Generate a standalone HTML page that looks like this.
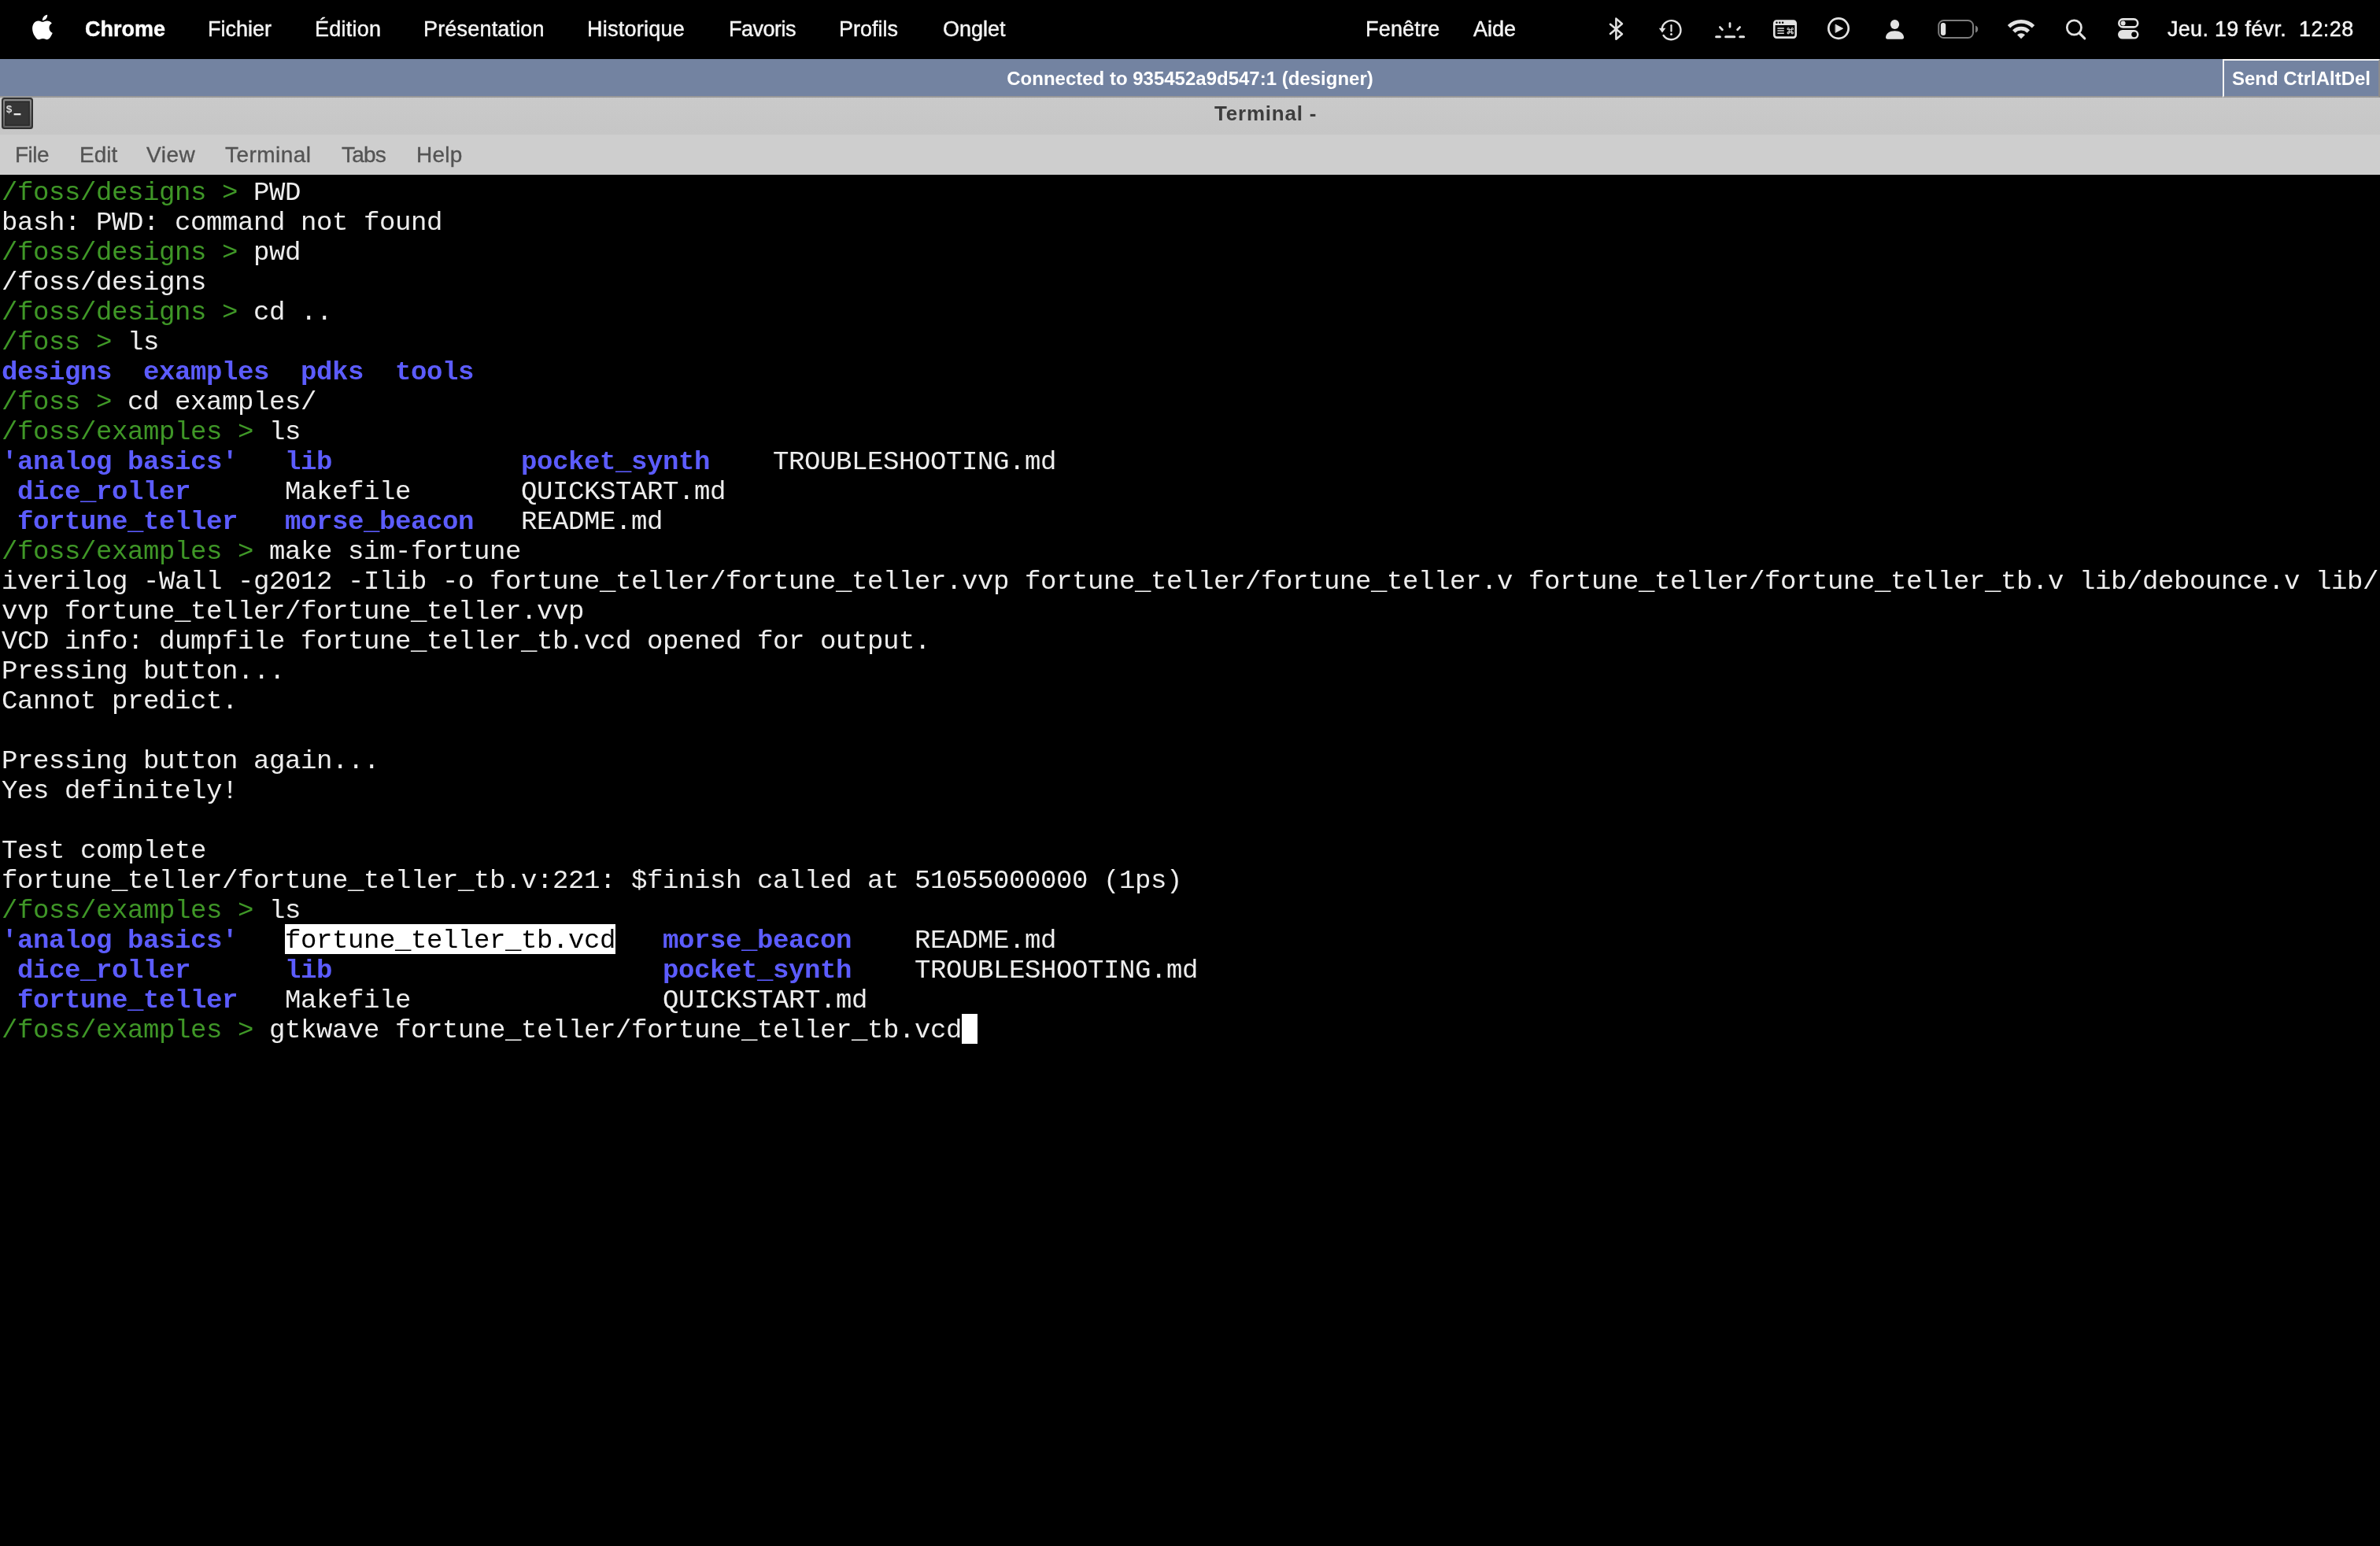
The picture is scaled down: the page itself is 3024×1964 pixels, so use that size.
<!DOCTYPE html>
<html lang="fr">
<head>
<meta charset="utf-8">
<title>Terminal -</title>
<style>
html,body{margin:0;padding:0;overflow:hidden;}
#macbar .mi,#vncbar,#cad,#title .t,#menu .m,#term .r{will-change:transform;}
body{width:3024px;height:1964px;overflow:hidden;background:#000;position:relative;font-family:"Liberation Sans",sans-serif;}
.abs{position:absolute;}
/* macOS menu bar */
#macbar{position:absolute;left:0;top:0;width:3024px;height:75px;background:#000;color:#ececec;}
#macbar .mi{-webkit-text-stroke:0.45px #f4f4f4;position:absolute;top:0;height:75px;line-height:75px;font-size:27px;white-space:pre;color:#f4f4f4;}
#macbar .mi.b{font-weight:bold;color:#fff;-webkit-text-stroke:0.4px #fff;}
#macbar svg{position:absolute;overflow:visible;}
/* noVNC bar */
#vncbar{position:absolute;left:0;top:75px;width:3024px;height:47px;background:#7383a1;border-bottom:2px solid #999;color:#fff;font-weight:bold;font-size:24px;text-align:center;line-height:50px;}
#cad{position:absolute;left:2824px;top:75px;width:196px;height:45px;border-style:solid;border-width:2px;border-color:#f4f4f4 #8c8c8c #999 #f4f4f4;color:#fff;font-weight:bold;font-size:24px;line-height:45px;text-align:center;white-space:pre;}
/* xfce terminal title */
#title{position:absolute;left:0;top:124px;width:3024px;height:47px;background:linear-gradient(#cacaca,#c6c6c6);}
#title .t{position:absolute;left:1543px;top:0;height:47px;line-height:41px;font-size:26px;letter-spacing:0.8px;font-weight:bold;color:#3d3d3d;white-space:pre;}
#menu{position:absolute;left:0;top:171px;width:3024px;height:51px;background:#cecece;}
#menu .m{position:absolute;top:0;height:51px;line-height:51px;font-size:28px;color:#545454;-webkit-text-stroke:0.35px #545454;white-space:pre;}
/* terminal */
#term{position:absolute;left:0;top:222px;width:3024px;height:1742px;background:#000;overflow:hidden;}
#term .r{position:absolute;left:2px;height:38px;line-height:38px;white-space:pre;font-family:"Liberation Mono",monospace;font-size:34px;letter-spacing:-0.4033px;color:#ededed;}
#term .g{color:#3f9727;}
#term .d{color:#5c5cff;font-weight:bold;}
#term .sel{color:#000;}
#selbox{position:absolute;left:362px;top:952px;width:420px;height:38px;background:#fff;}
#cursor{position:absolute;left:1222px;top:1066px;width:20px;height:38px;background:#fff;}
</style>
</head>
<body>
<div id="macbar">
<svg id="micons" style="left:0;top:0" width="3024" height="75" viewBox="0 0 3024 75" fill="none" stroke="#e2e2e2" stroke-linecap="round" stroke-linejoin="round">
<g transform="translate(38.2,18.8) scale(1.31)" fill="#fff" stroke="none"><path d="M12.152 6.896c-.948 0-2.415-1.078-3.96-1.04-2.04.027-3.91 1.183-4.961 3.014-2.117 3.675-.546 9.103 1.519 12.09 1.013 1.454 2.208 3.09 3.792 3.039 1.52-.065 2.09-.987 3.935-.987 1.831 0 2.35.987 3.96.948 1.637-.026 2.676-1.48 3.676-2.948 1.156-1.688 1.636-3.325 1.662-3.415-.039-.013-3.182-1.221-3.22-4.857-.026-3.04 2.48-4.494 2.597-4.559-1.429-2.09-3.623-2.324-4.39-2.376-2-.156-3.675 1.09-4.61 1.09zM15.53 3.83c.843-1.012 1.4-2.427 1.245-3.83-1.207.052-2.662.805-3.532 1.818-.78.896-1.454 2.338-1.273 3.714 1.338.104 2.715-.688 3.559-1.701"/></g>
<!-- bluetooth -->
<path d="M2046,30.7 L2061,43.3 L2053.4,49.8 L2053.4,23.6 L2061,30.2 L2046,43" stroke-width="2.5"/>
<!-- time machine -->
<path d="M2113.6,45 A12,12 0 1 0 2111.6,36.5" stroke-width="2.4"/>
<path d="M2107.8,35.8 L2116.4,35.8 L2112,41.6 Z" fill="#e2e2e2" stroke="none"/>
<path d="M2123.5,32.2 L2123.5,39.6" stroke-width="2.2"/><circle cx="2123.5" cy="43.5" r="1.5" fill="#e2e2e2" stroke="none"/>
<!-- keyboard brightness -->
<path d="M2180.6,46.8 H2185.4 M2192.6,46.8 H2203.8 M2210.8,46.8 H2215.6" stroke-width="3"/>
<path d="M2198,29.6 V34.2 M2185.4,34.6 L2188.4,37.8 M2210.6,34.6 L2207.6,37.8" stroke-width="2.8"/>
<!-- window with cmd -->
<rect x="2254.3" y="26.5" width="27.4" height="21.1" rx="3" stroke-width="2.6"/>
<rect x="2255" y="27" width="26" height="5" fill="#e2e2e2" stroke="none"/>
<circle cx="2257.5" cy="28.8" r="1.2" fill="#000" stroke="none"/><circle cx="2261.3" cy="28.8" r="1.2" fill="#000" stroke="none"/><circle cx="2265.1" cy="28.8" r="1.2" fill="#000" stroke="none"/>
<path d="M2258.4,36 H2266.8 M2258.4,39.1 H2266.8 M2258.4,42.2 H2266.8" stroke-width="1.5" stroke-linecap="butt"/>
<path d="M2273.3,37.8 H2276.1 V40.6 H2273.3 Z M2273.3,37.8 H2272.15 A1.15,1.15 0 1 1 2273.3,36.65 Z M2276.1,37.8 V36.65 A1.15,1.15 0 1 1 2277.25,37.8 Z M2276.1,40.6 H2277.25 A1.15,1.15 0 1 1 2276.1,41.75 Z M2273.3,40.6 V41.75 A1.15,1.15 0 1 1 2272.15,40.6 Z" stroke-width="1.05"/>
<!-- play -->
<circle cx="2336" cy="36.1" r="12.7" stroke-width="2.7"/>
<path d="M2332.4,31.3 L2341.6,36.2 L2332.4,41.2 Z" fill="#e2e2e2" stroke="#e2e2e2" stroke-width="0.9"/>
<!-- person -->
<ellipse cx="2407.5" cy="31" rx="5.6" ry="6" fill="#e2e2e2" stroke="none"/>
<path d="M2396,47.6 C2396,42.5 2401,39.2 2407.5,39.2 C2414,39.2 2419,42.5 2419,47.6 C2419,49 2418.2,49.7 2416.8,49.7 H2398.2 C2396.8,49.7 2396,49 2396,47.6 Z" fill="#e2e2e2" stroke="none"/>
<!-- battery -->
<rect x="2463.2" y="26" width="43.8" height="22" rx="6.5" stroke="#7d7d7d" stroke-width="2"/>
<rect x="2465.9" y="28.9" width="6.3" height="16.2" rx="3" fill="#e4e4e4" stroke="none"/>
<path d="M2510,32.6 C2512.2,33.4 2513.2,35 2513.2,37 C2513.2,39 2512.2,40.6 2510,41.4 Z" fill="#7d7d7d" stroke="none"/>
<!-- wifi -->
<g fill="#e2e2e2" stroke="none">
<path d="M2550.8,31.9 A24.6,24.6 0 0 1 2585.2,31.9 L2581.8,35.4 A19.7,19.7 0 0 0 2554.2,35.4 Z"/>
<path d="M2557,38.2 A15.8,15.8 0 0 1 2579,38.2 L2575.6,41.7 A10.9,10.9 0 0 0 2560.4,41.7 Z"/>
<path d="M2563,44.2 A7.2,7.2 0 0 1 2573,44.2 L2568,49.2 Z"/>
</g>
<!-- search -->
<circle cx="2635.4" cy="35" r="9.1" stroke-width="2.7"/>
<path d="M2642.3,42.4 L2648.8,48.9" stroke-width="3"/>
<!-- control center -->
<rect x="2692.3" y="24.4" width="23.9" height="10" rx="5" stroke-width="2.6"/>
<circle cx="2697.6" cy="29.4" r="3" fill="#e2e2e2" stroke="none"/>
<rect x="2691" y="38" width="26.5" height="11.6" rx="5.8" fill="#e2e2e2" stroke="none"/>
<circle cx="2711.6" cy="43.8" r="3.4" fill="#000" stroke="none"/>
</svg>
<span class="mi b" style="left:108px">Chrome</span>
<span class="mi" style="left:264px">Fichier</span>
<span class="mi" style="left:399.5px;letter-spacing:0.25px">Édition</span>
<span class="mi" style="left:537.5px;letter-spacing:0.18px">Présentation</span>
<span class="mi" style="left:745.5px;letter-spacing:0.25px">Historique</span>
<span class="mi" style="left:925.5px;letter-spacing:-0.5px">Favoris</span>
<span class="mi" style="left:1066px">Profils</span>
<span class="mi" style="left:1198px">Onglet</span>
<span class="mi" style="left:1734.5px;letter-spacing:0.2px">Fenêtre</span>
<span class="mi" style="left:1872px">Aide</span>
<span class="mi" style="left:2754px;letter-spacing:0.3px">Jeu. 19 févr.</span>
<span class="mi" style="left:2921px;letter-spacing:0.4px">12:28</span>
</div>
<div id="vncbar">Connected to 935452a9d547:1 (designer)</div>
<div id="cad">Send CtrlAltDel</div>
<div id="title"><svg style="position:absolute;left:2px;top:0;will-change:transform" width="40" height="40" viewBox="0 0 40 40">
<rect x="0" y="0" width="40" height="40" rx="3.5" fill="#303030"/>
<linearGradient id="tg" x1="0" y1="0" x2="0" y2="1"><stop offset="0" stop-color="#8a8a8a"/><stop offset="1" stop-color="#626262"/></linearGradient><rect x="2" y="2" width="36" height="36" rx="2" fill="url(#tg)"/>
<rect x="4.2" y="4.4" width="31.6" height="31.4" fill="#242424"/>
<rect x="5.4" y="5.6" width="29.2" height="29" fill="#363636"/>
<text x="5.4" y="18.8" font-family="Liberation Mono, monospace" font-weight="bold" font-size="13.5" fill="#dcdcdc">$</text>
<rect x="15.6" y="20" width="8.8" height="2.3" fill="#ececec"/>
</svg><span class="t">Terminal -</span></div>
<div id="menu">
<span class="m" style="left:19px;letter-spacing:-0.5px">File</span>
<span class="m" style="left:101px">Edit</span>
<span class="m" style="left:186px;letter-spacing:0.5px">View</span>
<span class="m" style="left:286px;letter-spacing:0.45px">Terminal</span>
<span class="m" style="left:434px;letter-spacing:-0.8px">Tabs</span>
<span class="m" style="left:529px;letter-spacing:0.25px">Help</span>
</div>
<div id="term">
<div id="selbox"></div>
<div class="r" style="top:4px"><span class="g">/foss/designs &gt;</span> PWD</div>
<div class="r" style="top:42px">bash: PWD: command not found</div>
<div class="r" style="top:80px"><span class="g">/foss/designs &gt;</span> pwd</div>
<div class="r" style="top:118px">/foss/designs</div>
<div class="r" style="top:156px"><span class="g">/foss/designs &gt;</span> cd ..</div>
<div class="r" style="top:194px"><span class="g">/foss &gt;</span> ls</div>
<div class="r" style="top:232px"><span class="d">designs</span>  <span class="d">examples</span>  <span class="d">pdks</span>  <span class="d">tools</span></div>
<div class="r" style="top:270px"><span class="g">/foss &gt;</span> cd examples/</div>
<div class="r" style="top:308px"><span class="g">/foss/examples &gt;</span> ls</div>
<div class="r" style="top:346px"><span class="d">'analog basics'</span>   <span class="d">lib</span>            <span class="d">pocket_synth</span>    TROUBLESHOOTING.md</div>
<div class="r" style="top:384px"> <span class="d">dice_roller</span>      Makefile       QUICKSTART.md</div>
<div class="r" style="top:422px"> <span class="d">fortune_teller</span>   <span class="d">morse_beacon</span>   README.md</div>
<div class="r" style="top:460px"><span class="g">/foss/examples &gt;</span> make sim-fortune</div>
<div class="r" style="top:498px">iverilog -Wall -g2012 -Ilib -o fortune_teller/fortune_teller.vvp fortune_teller/fortune_teller.v fortune_teller/fortune_teller_tb.v lib/debounce.v lib/c</div>
<div class="r" style="top:536px">vvp fortune_teller/fortune_teller.vvp</div>
<div class="r" style="top:574px">VCD info: dumpfile fortune_teller_tb.vcd opened for output.</div>
<div class="r" style="top:612px">Pressing button...</div>
<div class="r" style="top:650px">Cannot predict.</div>
<div class="r" style="top:726px">Pressing button again...</div>
<div class="r" style="top:764px">Yes definitely!</div>
<div class="r" style="top:840px">Test complete</div>
<div class="r" style="top:878px">fortune_teller/fortune_teller_tb.v:221: $finish called at 51055000000 (1ps)</div>
<div class="r" style="top:916px"><span class="g">/foss/examples &gt;</span> ls</div>
<div class="r" style="top:954px"><span class="d">'analog basics'</span>   <span class="sel">fortune_teller_tb.vcd</span>   <span class="d">morse_beacon</span>    README.md</div>
<div class="r" style="top:992px"> <span class="d">dice_roller</span>      <span class="d">lib</span>                     <span class="d">pocket_synth</span>    TROUBLESHOOTING.md</div>
<div class="r" style="top:1030px"> <span class="d">fortune_teller</span>   Makefile                QUICKSTART.md</div>
<div class="r" style="top:1068px"><span class="g">/foss/examples &gt;</span> gtkwave fortune_teller/fortune_teller_tb.vcd</div>
<div id="cursor"></div>
</div>
</body>
</html>
